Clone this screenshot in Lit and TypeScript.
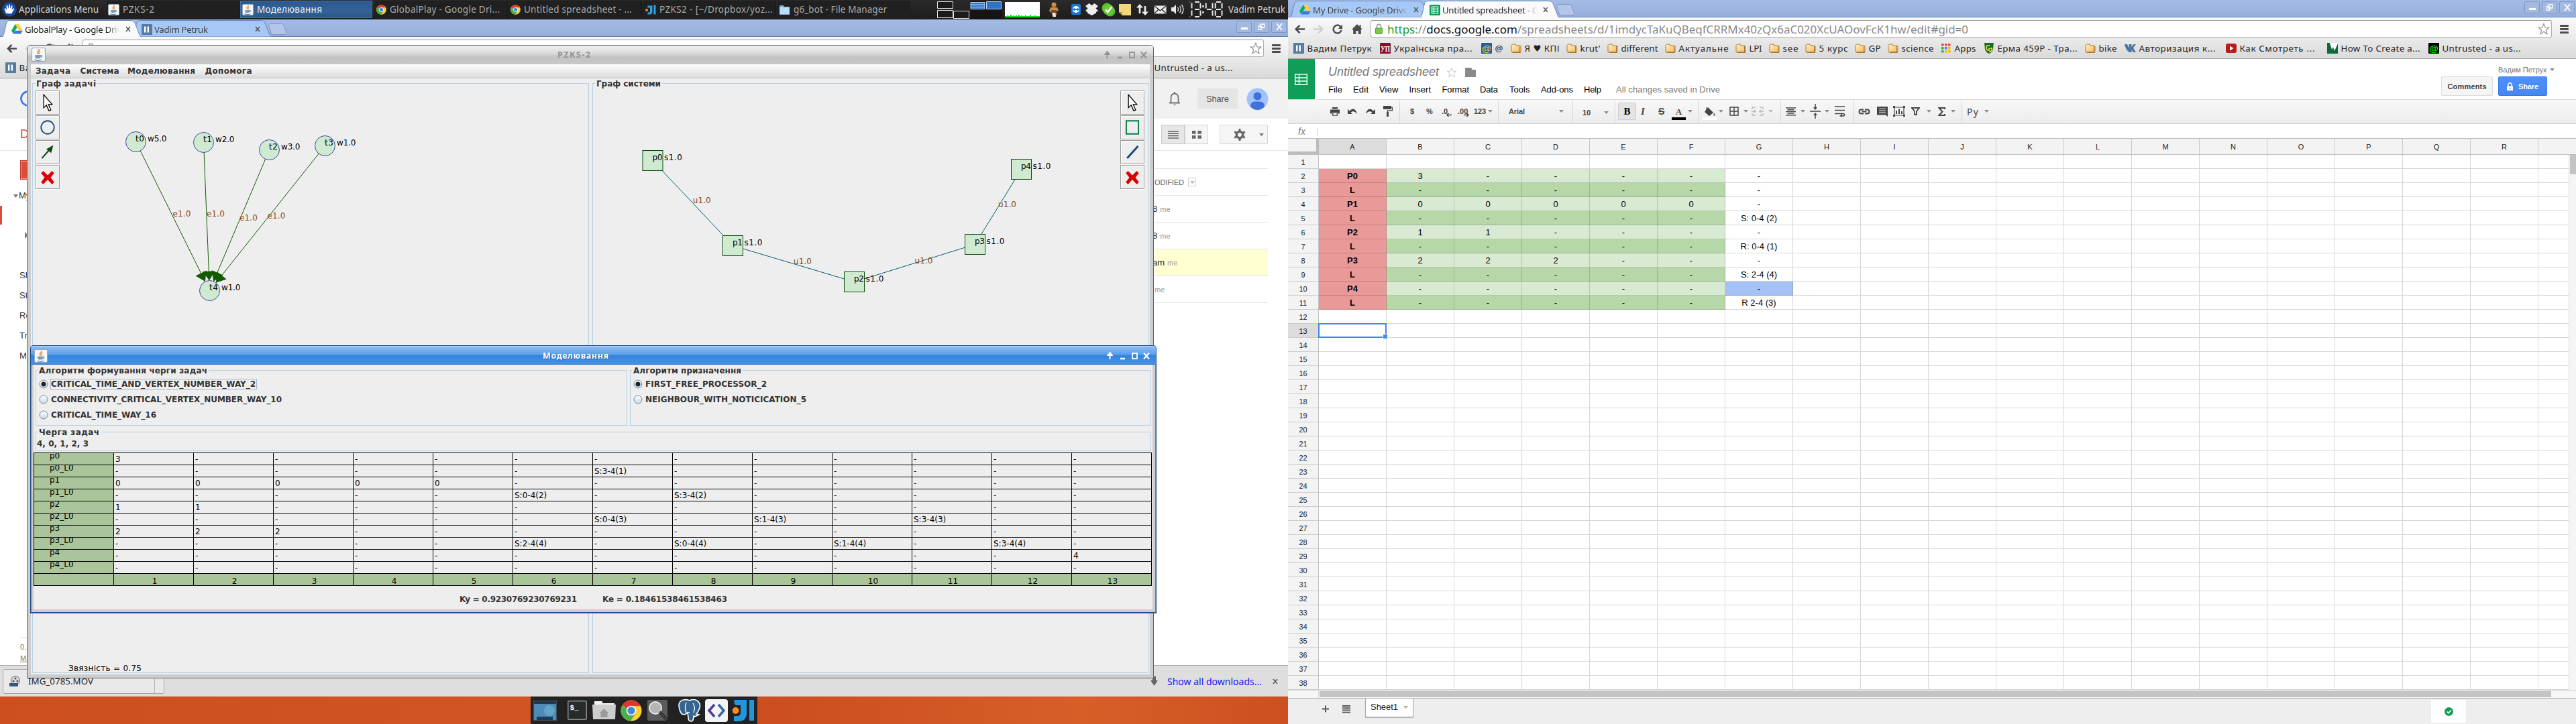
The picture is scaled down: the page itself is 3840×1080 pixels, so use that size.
import { LitElement, html, svg, css, nothing } from "lit";
import { customElement, property, query } from "lit/decorators.js";
import { classMap } from "lit/directives/class-map.js";

type Slot = [number, unknown];

/* Lays items out in a flex row; each one is as wide as the distance to its successor. */
const slots = (start: number, items: Slot[], end: number) => html`
  <div class="pad" style=${`width:${start}px`}></div>
  ${items.map(([x, t], i) => {
    const next = i + 1 < items.length ? items[i + 1][0] : end;
    return html`<div class="slot" style=${`width:${next - x}px`}>${t}</div>`;
  })}
`;

/* The same for a column. */
const vslots = (start: number, items: Slot[], end: number) => html`
  <div class="pad" style=${`height:${start}px`}></div>
  ${items.map(([y, t], i) => {
    const next = i + 1 < items.length ? items[i + 1][0] : end;
    return html`<div class="vslot" style=${`height:${next - y}px`}>${t}</div>`;
  })}
`;

const fit = (t: string, w: number) => html`<fit-text .t=${t} .w=${w}></fit-text>`;

const shared = css`
  * { box-sizing: border-box; }
  svg { display: block; flex: none; }
  .pad { flex: none; }
  .slot { flex: none; display: flex; align-items: center; white-space: nowrap; }
  .vslot { flex: none; display: flex; align-items: flex-start; white-space: nowrap; }
`;

/* One line of text tracked to an exact width. */
@customElement("fit-text")
class FitText extends LitElement {
  @property() t = "";
  @property({ type: Number }) w = 0;
  @query("span") span!: HTMLElement;
  static styles = css`
    :host { display: block; white-space: pre; flex: none; }
    span { display: inline-block; }
  `;
  updated() {
    this.track();
    document.fonts.ready.then(() => this.track());
  }
  track() {
    const s = this.span;
    s.style.letterSpacing = "0px";
    const n = s.getBoundingClientRect().width;
    const len = [...this.t].length;
    if (len > 1) s.style.letterSpacing = `${(this.w - n) / (len - 1)}px`;
    this.style.width = `${this.w}px`;
  }
  render() { return html`<span>${this.t}</span>`; }
}

/* ---------- icons ---------- */
const javaIcon = (s = 18) => html`<svg width=${s} height=${s} viewBox="0 0 20 20">
  <rect x=".5" y=".5" width="19" height="19" rx="2" fill="#f7f7f5" stroke="#8fa9c4"/>
  <path d="M10.500 2c1.500 2-2.600 3-2.200 5 .2 1 1.200 1.500 1.400 2.500M12 4.500c-.5 1.200-2 1.700-1.600 3 .3.800.9 1 .7 2" fill="none" stroke="#ec8b2a" stroke-width="1.400"/>
  <path d="M5 10.500h8v2.500c0 2-1.500 2.500-2.500 2.500h-3c-1.500 0-2.500-1-2.500-2.500z" fill="#7c9cbd"/>
  <path d="M13 11.200c2.200-.6 2.300 2 0 2.300M4 17.300c3 1.200 8 1 10.500 0" fill="none" stroke="#5b80a8" stroke-width="1.200"/>
</svg>`;
const chromeIcon = (s = 16) => html`<svg width=${s} height=${s} viewBox="0 0 32 32">
  <circle cx="16" cy="16" r="15.500" fill="#fbd033"/>
  <path d="M16 16 2.600 8.250A15.500 15.500 0 0 1 29.400 8.250H16z" fill="#e0372c"/>
  <path d="M16 16 2.600 8.250A15.500 15.500 0 0 0 15 31.500L22.500 20z" fill="#4fae4b"/>
  <path d="M16 8.700h13.600" stroke="#c92f25" stroke-width="1"/>
  <circle cx="16" cy="16" r="7.300" fill="#fff"/><circle cx="16" cy="16" r="5.700" fill="#4a86d8"/>
</svg>`;
const driveIcon = html`<svg width="17" height="15" viewBox="0 0 17 15">
  <path d="M5.700 0h5.400l5.600 9.800h-5.400z" fill="#ffcd40"/><path d="M5.700 0 0 9.800 2.800 14.500 8.500 4.800z" fill="#11a861"/>
  <path d="M5.600 9.800h11.100l-2.800 4.700H2.800z" fill="#3777e3"/></svg>`;
const vpIcon = html`<svg width="16" height="16" viewBox="0 0 16 16"><rect width="16" height="16" fill="#567ca4"/>
  <path d="M5.200 3.500v9M9.800 3.500v9" stroke="#fff" stroke-width="2.400"/></svg>`;
const sheetIcon = html`<svg width="16" height="16" viewBox="0 0 16 16"><rect width="16" height="16" rx="1.500" fill="#109d58"/>
  <path d="M3.500 3h9v10h-9zM3.500 6.300h9M3.500 9.700h9M6.500 3v10" fill="none" stroke="#fff" stroke-width="1.200"/></svg>`;
const folderIcon = html`<svg width="16" height="16" viewBox="0 0 16 16">
  <defs><linearGradient id="f" x1="0" y1="0" x2="1" y2="1"><stop offset="0" stop-color="#fff0c8"/><stop offset="1" stop-color="#f4bd5e"/></linearGradient></defs>
  <path d="M1 3.500 2.500 2h4.500l1 2H13.500L15 5v8.500h-14z" fill="url(#f)" stroke="#b07a34"/><path d="M13.500 4.500v10M2.500 14.500h12.300" stroke="#a87838"/></svg>`;
const starIcon = (s = 18, c = "#8c8c8c") => html`<svg width=${s} height=${s} viewBox="0 0 18 18">
  <path d="M9 1.200 11.200 7h5.700l-4.600 3.700 1.700 6L9 13.200l-5 3.500 1.700-6L1.100 7h5.700z" fill="#fff" stroke=${c} stroke-width="1.100"/></svg>`;
const caret = (c = "#8c8c8c") => html`<svg width="7" height="4" viewBox="0 0 7 4"><path d="M0 0h7L3.500 4z" fill=${c}/></svg>`;
const nodeRed = svg`<path d="M4 3 9 8 14 3l2.500 2.500-4 5 4 5.500L14 18.500 9 13l-5 5.500L1.500 16l4-5.500-4-5z" transform="translate(1 0)" fill="#dc0000"/>`;
const arrowCursor = svg`<path d="M5.500 1v15l3.200-3 2.800 6.500 2.200-1-2.700-6.300h4.200z" fill="#fff" stroke="#000"/>`;

const iconUp = html`<svg width="9" height="12" viewBox="0 0 9 12"><path d="M4.500 1v10M1.500 5l3-4 3 4z" fill="currentColor" stroke="currentColor" stroke-width="2"/></svg>`;
const iconMin = html`<svg width="7" height="12" viewBox="0 0 7 12"><path d="M0 10h7" stroke="currentColor" stroke-width="2.500"/></svg>`;
const iconMax = html`<svg width="9" height="12" viewBox="0 0 9 12"><path d="M1 2h7v8H1z" fill="none" stroke="currentColor" stroke-width="1.800"/></svg>`;
const iconClose = html`<svg width="10" height="12" viewBox="0 0 10 12"><path d="M1 1.500l8 9M9 1.500l-8 9" stroke="currentColor" stroke-width="2.200"/></svg>`;

/* ---------- browser frame ---------- */
type Tab = { icon: unknown; text: string; w: number; active: boolean };
type Mark = [number, unknown, string, number];
const tile = (bg: string, fg: string, t: string, serif = false) => html`<svg width="16" height="16" viewBox="0 0 16 16">
  <rect width="16" height="16" rx="1" fill=${bg}/><text x="8" y="13" text-anchor="middle" font-size="13" font-weight="bold"
  font-family=${serif ? "Liberation Serif, serif" : "Liberation Sans, sans-serif"} fill=${fg} textLength="14" lengthAdjust="spacingAndGlyphs">${t}</text></svg>`;

const appsIcon = html`<svg width="15" height="16" viewBox="0 0 15 16">${[0, 1, 2].map(r => [0, 1, 2].map(c =>
  svg`<rect x=${c * 5} y=${1 + r * 5} width="3.500" height="3.500" fill=${[["#e8453c", "#e8453c", "#e8453c"], ["#34a853", "#4285f4", "#fbbc05"], ["#34a853", "#fbbc05", "#fbbc05"]][r][c]}/>`))}</svg>`;
const vkIcon = html`<svg width="17" height="14" viewBox="0 0 17 14"><path d="M0 1h4l2.500 6V1h4v4l3-4H17l-4 5.500L17 13h-4l-2.500-3.500V13H8C4 12 1.500 7 0 1z" fill="#4c75a3"/></svg>`;
const ytIcon = html`<svg width="16" height="14" viewBox="0 0 16 14"><rect width="16" height="14" rx="3" fill="#b81d1a"/><path d="M6 3.500v7L11.500 7z" fill="#fff"/></svg>`;
const gsIcon = html`<svg width="16" height="16" viewBox="0 0 16 16"><path d="M1 0h14l-1 10q-2 5-6 6-4-1-6-6z" fill="#17702f"/>
  <path d="M9 4H5.500L4 6v3l2 2h2V8M9 8h3l.5 2-2 3H8" fill="none" stroke="#f4e12c" stroke-width="1.600"/></svg>`;
const wIcon = html`<svg width="16" height="16" viewBox="0 0 16 16"><rect width="16" height="16" fill="#0b6a3a"/><path d="M4 0 7 10l2-4 2 6L16 1V0z" fill="#fff"/></svg>`;

const BOOKMARKS: Mark[] = [
  [8, vpIcon, "Вадим Петрук", 96], [137, tile("#8f0b2e", "#fff", "УП", true), "Українська пра...", 117],
  [288, tile("#1c5fa8", "#ffc23d", "@"), "@", 12], [332, folderIcon, "Я ♥ КПІ", 52], [415, folderIcon, "krut'", 30],
  [476, folderIcon, "different", 55], [562, folderIcon, "Актуальне", 74], [667, folderIcon, "LPI", 19],
  [717, folderIcon, "see", 23], [771, folderIcon, "5 курс", 43], [845, folderIcon, "GP", 18], [894, folderIcon, "science", 48],
  [974, appsIcon, "Apps", 32], [1037, gsIcon, "Ерма 459Р - Тра...", 119], [1188, folderIcon, "bike", 27],
  [1247, vkIcon, "Авторизация к...", 114], [1398, ytIcon, "Как Смотреть ...", 112], [1549, wIcon, "How To Create a...", 118],
  [1700, tile("#000", "#0f0", "@"), "Untrusted - a us...", 117],
];

@customElement("browser-frame")
class BrowserFrame extends LitElement {
  @property({ attribute: false }) tabs: Tab[] = [];
  @property({ attribute: false }) marks: Mark[] = BOOKMARKS;
  @property({ attribute: false }) url: [string, string, string] = ["", "", ""];
  @property({ type: Number }) urlWidth = 866;
  static styles = [shared, css`
    :host { display: block; height: 88px; font: 13.300px "Noto Sans", "Open Sans", "DejaVu Sans", sans-serif; color: #222; }
    .strip { height: 26px; display: flex; background: linear-gradient(#a4bce4, #97aedb); border-bottom: 1px solid #5f7fae; padding-left: 3px; }
    .tab { position: relative; isolation: isolate; width: 194px; height: 25px; display: flex; align-items: center; padding: 4px 0 0 14px; color: #444; }
    .tab.active { z-index: 1; height: 26px; padding-top: 3px; color: #222; }
    .shape { position: absolute; left: 0; top: 1px; z-index: -1; }
    .name { width: 141px; overflow: hidden; margin-left: 3px; -webkit-mask-image: linear-gradient(90deg, #000 87%, transparent); }
    .x { margin-left: 9px; }
    .plus { margin: 6px 0 0 9px; }
    .win { margin-left: auto; display: flex; gap: 3px; padding: 2px 2px 0 0; }
    .wb { width: 23px; height: 18px; border: 1px solid #7f99c6; border-radius: 2px; background: #a3b9e0; display: grid; place-items: center; }
    .tools { height: 61px; background: linear-gradient(#f9f9f9, #ebebeb 48%, #dadada); padding-top: 4px; }
    .nav { height: 26px; display: flex; }
    .omni { width: 1761px; height: 26px; border: 1px solid #b0b0b0; border-top-color: #989898; border-radius: 3px; background: #fff; display: flex; align-items: center; padding-left: 6px; font-size: 17px; }
    .url { margin-left: 7px; display: flex; color: #888; overflow: hidden; height: 24px; align-items: center; }
    .omni .star { margin-left: auto; padding-right: 2px; }
    .marks { height: 31px; display: flex; align-items: center; }
    .marks .slot { gap: 4.500px; }
    .line { height: 1px; background: #a3a3a3; }
  `];
  render() {
    const [a, b, c] = this.url;
    return html`
      <div class="strip">
        ${this.tabs.map(t => html`<div class=${classMap({ tab: true, active: t.active })}>
          <svg class="shape" width="208" height="25" viewBox="0 0 208 25">
            <path d="M0 25C4 24 5 4 8 2Q9 .5 12 .5H192Q196 .5 198 4L205 22Q206 25 208 25z" fill=${t.active ? "#fafafa" : "#a6c8f6"} stroke="#6a87b8"/>
            ${t.active ? svg`<path d="M2 25h204" stroke="#fafafa" stroke-width="2"/>` : nothing}
          </svg>
          ${t.icon}<div class="name">${fit(t.text, t.w)}</div>
          <svg class="x" width="8" height="9" viewBox="0 0 8 9"><path d="M1 1l6 7M7 1L1 8" stroke="#555" stroke-width="1.500"/></svg>
        </div>`)}
        <svg class="plus" width="28" height="17" viewBox="0 0 28 17"><path d="M2 .5h18q2 0 3 3l4 11q0 2-2 2H7q-2 0-3-3L.8 3Q.5.5 2 .5z" fill="#b3c5e8" stroke="#7f99c6"/></svg>
        <div class="win">
          <div class="wb"><svg width="10" height="9"><path d="M0 6.500h10" stroke="#fff" stroke-width="3"/></svg></div>
          <div class="wb"><svg width="11" height="10" viewBox="0 0 11 10"><path d="M3.500 1h6.500v5H3.500zM1 4h5v5H1z" fill="none" stroke="#fff" stroke-width="1.300"/></svg></div>
          <div class="wb"><svg width="10" height="10" viewBox="0 0 10 10"><path d="M1 0l8 10M9 0L1 10" stroke="#fff" stroke-width="1.800"/></svg></div>
        </div>
      </div>
      <div class="tools">
        <div class="nav">
          ${slots(10, [
            [10, html`<svg width="15" height="13" viewBox="0 0 15 13"><path d="M15 6.500H3M7.500.8 1.800 6.500l5.700 5.700" fill="none" stroke="#4d4d4d" stroke-width="2.600"/></svg>`],
            [38, html`<svg width="15" height="13" viewBox="0 0 15 13"><path d="M0 6.500h12M7.500.8l5.700 5.700-5.700 5.700" fill="none" stroke="#cfcfcf" stroke-width="2.600"/></svg>`],
            [66, html`<svg width="16" height="15" viewBox="0 0 16 15"><path d="M12.500 4A6 6 0 1 0 13.500 9" fill="none" stroke="#4d4d4d" stroke-width="2.500"/><path d="M15 .5v6.500H8.800z" fill="#4d4d4d"/></svg>`],
            [95, html`<svg width="16" height="15" viewBox="0 0 16 15"><path d="M8 0 0 8h2.200v7H6.300v-5h3.400v5h4.100V8H16l-2.500-2.500V1h-2v2.500z" fill="#4d4d4d"/></svg>`],
            [123, html`<div class="omni">
              <svg width="11" height="16" viewBox="0 0 11 16"><path d="M2.500 8V4.500a3 3.300 0 0 1 6 0V8" fill="none" stroke="#9a9a9a" stroke-width="1.600"/><rect x=".5" y="7" width="10" height="8.500" rx="1" fill="#7cc850" stroke="#4f9b2c"/></svg>
              <div class="url"><fit-url .parts=${[a, b, c]} .w=${this.urlWidth}></fit-url></div>
              <div class="star">${starIcon()}</div></div>`],
            [1896, html`<svg width="13" height="13" viewBox="0 0 13 13"><path d="M1 1.500h11M1 6.500h11M1 11.500h11" stroke="#4d4d4d" stroke-width="2.800" stroke-linecap="round"/></svg>`],
          ], 1912)}
        </div>
        <div class="marks">${slots(8, this.marks.map(([x, i, t, w]) => [x, html`${i}${fit(t, w)}`] as Slot), 1880)}</div>
      </div>
      <div class="line"></div>`;
  }
}

@customElement("fit-url")
class FitUrl extends LitElement {
  @property({ attribute: false }) parts: string[] = [];
  @property({ type: Number }) w = 0;
  @query("div") box!: HTMLElement;
  static styles = css`
    :host { display: block; white-space: pre; }
    div { display: inline-block; color: #8a8a8a; }
    .s { color: #1f9a1f; } .h { color: #111; }
  `;
  updated() {
    const run = () => {
      this.box.style.letterSpacing = "0px";
      const n = this.box.getBoundingClientRect().width;
      this.box.style.letterSpacing = `${(this.w - n) / (this.parts.join("").length + 3)}px`;
    };
    run();
    document.fonts.ready.then(run);
  }
  render() {
    const [s, h, p] = this.parts;
    return html`<div><span class="s">${s}</span>://<span class="h">${h}</span>${p}</div>`;
  }
}

/* ---------- top panel ---------- */
const SEG: Record<string, string> = { "1": "bc", "3": "abgcd", "4": "fgbc", "8": "abcdefg" };
const digit = (d: string, x: number) => {
  const p: Record<string, string> = {
    a: "M2 1h7", b: "M10.500 2.500v8", c: "M10.500 13.500v8", d: "M2 23h7", e: "M.7 13.500v8", f: "M.7 2.500v8", g: "M2 12h7",
  };
  return svg`<g transform=${`translate(${x} 0)`}>${[...SEG[d]].map(s => svg`<path d=${p[s]} stroke="#e8e8e8" stroke-width="2"/>`)}</g>`;
};

@customElement("top-panel")
class TopPanel extends LitElement {
  static styles = [shared, css`
    :host { display: flex; height: 29px; background: linear-gradient(#2a2a2a, #1d1d1d); color: #d8d8d8; padding-bottom: 1px;
      font: 13.500px "Noto Sans", "Open Sans", "DejaVu Sans", sans-serif; overflow: hidden; }
    .task { height: 26px; display: flex; align-items: center; gap: 5px; padding-left: 2px; width: 198px; color: #a9a9a9; border-right: 1px solid #171717; background: #202020; }
    .task.on { background: linear-gradient(#2b598f, #336299 60%, #2a5587); border: 1px solid #4775a8; color: #eee; width: 197px; }
    .menu { display: flex; gap: 3px; align-items: center; color: #d4d4d4; }
  `];
  render() {
    const task = (i: unknown, t: string, w: number, on = false) =>
      html`<div class=${classMap({ task: true, on })}>${i}${fit(t, w)}</div>`;
    return html`${slots(3, [
      [3, html`<div class="menu"><svg width="22" height="22" viewBox="0 0 22 22"><circle cx="11" cy="11" r="10.700" fill="#1747a0"/>
        <path d="M6 17 3.500 10l1.500-1 2 3L6.500 5 8 4.500 9.500 10 10.500 3.500l1.600.2L12.200 10l2.300-5 1.300.8-1.300 5.700L17.500 9l.8 1.500L14 17.500z" fill="#fff"/></svg>${fit("Applications Menu", 119)}</div>`],
      [159, task(javaIcon(17), "PZKS-2", 47)],
      [358, task(javaIcon(17), "Моделювання", 97, true)],
      [559, task(chromeIcon(15), "GlobalPlay - Google Dri...", 164)],
      [759, task(chromeIcon(15), "Untitled spreadsheet - ...", 161)],
      [959, task(html`<svg width="17" height="17" viewBox="0 0 32 34"><rect width="32" height="34" fill="#222"/><path d="M8 5h14v18q0 8-9 8H8v-6h4q3 0 3-3V11H8zM26 3h6v28h-6z" fill="#2d9fe0"/><circle cx="5" cy="18" r="4" fill="#f08a1c"/></svg>`, "PZKS2 - [~/Dropbox/yoz...", 169)],
      [1159, task(html`<svg width="17" height="16" viewBox="0 0 17 16"><path d="M1 2h6l1 2h8v12H1z" fill="#7fb0dc"/><path d="M1 5h15v10H1z" fill="#b9dcf8"/></svg>`, "g6_bot - File Manager", 139)],
      [1397, html`<svg width="97" height="27" viewBox="0 0 97 27">
        <rect x="49" width="48" height="27" fill="#151515"/>
        <path d="M.5 1.500h23v10H.5zM.5 14.500h23v11H.5zM24.500 15.500h23v11h-23z" fill="#1b1b1b" stroke="#e4e4e4"/>
        <path d="M50 2.500h21v10H50zM73.500 1.500h22v11h-22z" fill="#2f73c4" stroke="#bcd6f4"/><path d="M50 6h21M50 9.500h21" stroke="#cfe2f8"/></svg>`],
      [1498, html`<svg width="52" height="23" viewBox="0 0 52 23"><rect width="52" height="23" fill="#fff"/>
        <path d="M0 22h52M4 20v2M9 19v3M13 20v2M17 20v2M21 19v3M25 20v2M31 20v2M38 19v3M45 20v2" stroke="#12e312" stroke-width="2"/></svg>`],
      [1562, html`<svg width="18" height="23" viewBox="0 0 18 23"><circle cx="9" cy="4" r="3.500" fill="#c98a4e"/><path d="M4 8l10 0 2 5-3 1v3l-1 5H7l-1-5-4-4z" fill="#c98a4e"/><path d="M5 12h8v4H5z" fill="#7a4a20"/><path d="M7 16h4l1 6H8z" fill="#dfe8f4"/></svg>`],
      [1597, html`<svg width="14" height="16" viewBox="0 0 14 16"><rect width="14" height="16" rx="2" fill="#1679d8"/><circle cx="7" cy="8" r="5" fill="#fff"/><path d="M1.500 8l3.500-2.500v1.600h4V5.500L12.500 8 9 10.500V8.900H5v1.600z" fill="#1679d8"/></svg>`],
      [1618, html`<svg width="19" height="18" viewBox="0 0 19 18"><path d="M5.500 0 9.500 3 13.500 0 19 4l-3.500 3.500L19 11l-3 2v1.500L9.500 18 3 14.500V13L0 11l3.500-3.500L0 4z" fill="#eee"/></svg>`],
      [1642, html`<svg width="21" height="21" viewBox="0 0 21 21"><circle cx="8" cy="8" r="7.500" fill="#55b92c"/><circle cx="13" cy="13" r="7.500" fill="#55b92c"/><circle cx="10.500" cy="10.500" r="8" fill="#66c93c"/><path d="M6 10.500l3.300 3.500L15 6.500" fill="none" stroke="#fff" stroke-width="2.500"/></svg>`],
      [1667, html`<svg width="19" height="19" viewBox="0 0 19 19"><path d="M1 1h18v17H6L1 13z" fill="#f0d878"/><path d="M1 13h5v5z" fill="#b89b38"/></svg>`],
      [1694, html`<svg width="18" height="17" viewBox="0 0 18 17"><path d="M5 14V4M13 3v10" stroke="#eee" stroke-width="2.600"/><path d="M0 5.500 5 0l5 5.500zM8 11.500l5 5.500 5-5.500z" fill="#eee"/></svg>`],
      [1720, html`<svg width="19" height="13" viewBox="0 0 19 13"><rect x=".5" y=".5" width="18" height="12" fill="#e8e8e8"/><path d="M1 1l8.500 7L18 1M1 12l6-6M18 12l-6-6" fill="none" stroke="#222" stroke-width="1.200"/></svg>`],
      [1746, html`<svg width="19" height="16" viewBox="0 0 19 16"><path d="M0 5h3l4-4v14l-4-4H0z" fill="#e8e8e8"/><path d="M9.500 5q2 3 0 6M12.500 3q3.500 5 0 10M15.500 1q5 7 0 14" fill="none" stroke="#e8e8e8" stroke-width="1.300"/></svg>`],
      [1770, html`<svg width="54" height="24" viewBox="-2 0 54 24">${digit("1", -6)}${digit("3", 7)}<path d="M21.500 6v3M21.500 15v3" stroke="#e8e8e8" stroke-width="2.500"/>${digit("4", 25)}${digit("8", 39)}<path d="M0 1h3M0 23h3" stroke="#777"/></svg>`],
      [1831, fit("Vadim Petruk", 85)],
    ], 1920)}`;
  }
}

/* ---------- dock ---------- */
@customElement("app-dock")
class AppDock extends LitElement {
  static styles = [shared, css`
    :host { display: flex; width: 338px; height: 41px; background: #222; align-items: center; }
  `];
  render() {
    return slots(4, [
      [795, html`<svg width="35" height="30" viewBox="0 0 35 30"><rect x=".5" y=".5" width="34" height="29" fill="#22384c" stroke="#44525e"/><rect x="1" y="5" width="33" height="24" fill="#4d8ab6"/><circle cx="24" cy="15" r="8" fill="#6fb5cf" opacity=".6"/><rect x="5" y="24" width="24" height="5" fill="#1c3a60"/></svg>`],
      [846, html`<svg width="29" height="29" viewBox="0 0 29 29"><rect x=".8" y=".8" width="27.400" height="27.400" rx="1.500" fill="#262b2c" stroke="#8b8f90" stroke-width="1.500"/><text x="3.500" y="14" font-family="Liberation Mono, monospace" font-size="11" font-weight="bold" fill="#fff">$_</text></svg>`],
      [883, html`<svg width="35" height="27" viewBox="0 0 35 27"><path d="M3 0h12v3h18v6H3z" fill="#f4f4f4"/><path d="M0 5h35l-1 22H1z" fill="#cdcdcd"/><path d="M17.500 11l-7 7h2v6h10v-6h2z" fill="#9b9b9b"/></svg>`],
      [925, chromeIcon(32)],
      [965, html`<svg width="32" height="32" viewBox="0 0 32 32"><rect width="30" height="31" rx="2" fill="#5b5b5b"/><circle cx="12" cy="12" r="9" fill="#b4b4b4" stroke="#e6e6e6" stroke-width="2"/><path d="M18 18l12 12" stroke="#222" stroke-width="4"/><path d="M18 18l12 12" stroke="#888" stroke-width="1"/></svg>`],
      [1011, html`<svg width="34" height="34" viewBox="0 0 34 34"><path d="M8 1q5-1 9 1 5-3 11 0 6 4 4 11-2 6-5 9l4 1-6 3-2-1q0 8-4 8t-4-6l-1-7-4 3-5-1Q1 16 1 8 2 2 8 1z" fill="#336791" stroke="#fff" stroke-width="1.600"/><path d="M12 5q-3 8 0 15M22 6q4 6 1 14M14 20h3" fill="none" stroke="#fff" stroke-width="1.300"/></svg>`],
      [1051, html`<svg width="34" height="34" viewBox="0 0 34 34"><rect width="34" height="34" rx="4" fill="#f4f4f6"/><path d="M14 8 6 17l8 9" fill="none" stroke="#4a3a9c" stroke-width="3.500"/><path d="M20 8l8 9-8 9" fill="none" stroke="#3465a4" stroke-width="3.500"/></svg>`],
      [1092, html`<svg width="33" height="34" viewBox="0 0 33 34"><path d="M3 1h18v20q0 12-12 12H2v-8h5q5 0 5-5V9H5q-4-3-2-8zM25 1h7v31h-7z" fill="#2196dc"/><circle cx="4.500" cy="17" r="5" fill="#f68b1f"/></svg>`],
    ], 1129);
  }
}

/* ---------- graph editor window ---------- */
const TASKS: [string, string, number, number][] = [
  ["t0", "w5.0", 202.5, 211.5], ["t1", "w2.0", 303.5, 212.5], ["t2", "w3.0", 401.5, 223.5], ["t3", "w1.0", 484.5, 217.5],
];
const SINK: [string, string, number, number] = ["t4", "w1.0", 312.5, 433.5];
const PROCS: [string, number, number][] = [
  ["p0", 973, 239.5], ["p1", 1092.5, 366.5], ["p2", 1273.5, 420.5], ["p3", 1453.5, 364.5], ["p4", 1522.5, 252.5],
];

@customElement("graph-window")
class GraphWindow extends LitElement {
  static styles = [shared, css`
    :host { display: flex; flex-direction: column; box-sizing: border-box; width: 1680px; height: 945px; border: 1px solid #666; border-radius: 5px 5px 0 0; background: #cdcdcd;
      font: bold 12px "DejaVu Sans", sans-serif; color: #333; overflow: hidden; }
    .title { height: 28px; display: flex; align-items: center; background: linear-gradient(#f0f0f0, #dcdcdc 40%, #c2c2c2 62%, #c8c8c8); color: #949494; padding-bottom: 1px; font: bold 12.500px "Noto Sans", "Open Sans", sans-serif; }
    .body { flex: 1; margin: 0 5px 5px 5px; background: #eee; }
    .menu { height: 21px; background: linear-gradient(#fff, #dadada); border-bottom: 1px solid #ccc; display: flex; align-items: center; }
    .panels { display: flex; gap: 5px; padding: 7px 0 0 2px; }
    .panel { position: relative; width: 830px; height: 880px; border: 1px solid #b8cfe5; display: flex; flex-direction: column; align-items: flex-start; padding-left: 4px; }
    .panel.right { align-items: stretch; }
    .label { margin: -7px 0 3px -1px; height: 14px; line-height: 14px; padding: 0 2px; background: #eee; width: max-content; position: relative; }
    .tool { width: 36px; height: 36px; margin-bottom: 1px; border: 1px solid #999; box-shadow: inset 1px 1px #fff, 1px 1px #fff; background: #eee; display: grid; place-items: center; flex: none; }
    .panel.right .tool { align-self: flex-end; margin-right: 6px; }
    .canvas { position: absolute; left: -1px; top: -1px; pointer-events: none; }
    text { font: 12px "DejaVu Sans", sans-serif; fill: #000; }
    .w { fill: #8b4513; }
  `];
  tool(s: unknown) { return html`<div class="tool"><svg width="26" height="26" viewBox="0 0 20 20">${s}</svg></div>`; }
  render() {
    const [, , sx, sy] = SINK;
    const node = ([n, w, x, y]: [string, string, number, number]) => svg`
      <circle cx=${x} cy=${y} r="15" fill="#cfead1" stroke="#4048a0"/>
      <text x=${x - 0.5} y=${y - 0.5} textLength="13">${n}</text><text x=${x + 17.5} y=${y - 0.5} textLength="28.500">${w}</text>`;
    return html`
      <div class="title">${slots(6, [
        [47, javaIcon(21)], [831, fit("PZKS-2", 49)], [1646, iconUp], [1666, iconMin], [1683, iconMax], [1700, iconClose],
      ], 1715)}</div>
      <div class="body">
        <div class="menu">${slots(7, [
          [53, fit("Задача", 52)], [119.5, fit("Система", 58)], [190, fit("Моделювання", 101)], [305.5, fit("Допомога", 70)],
        ], 400)}</div>
        <div class="panels">
          <div class="panel">
            <div class="label">${fit("Граф задачі", 89)}</div>
            ${this.tool(arrowCursor)}
            ${this.tool(svg`<circle cx="10" cy="10" r="7.500" fill="none" stroke="#124f80" stroke-width="1.400"/>`)}
            ${this.tool(svg`<path d="M3.500 17 13 6" stroke="#0c4a12" stroke-width="1.600"/><path d="M16.500 2 8.500 6.500l5.500 4.500z" fill="#0c4a12"/>`)}
            ${this.tool(nodeRed)}
            <svg class="canvas" width="830" height="880" viewBox="48 124 830 880">
              ${TASKS.map(([, , x, y]) => {
                const d = Math.hypot(sx - x, sy - y), ux = (sx - x) / d, uy = (sy - y) / d;
                const tx = sx - ux * 15, ty = sy - uy * 15, bx = tx - ux * 14, by = ty - uy * 14;
                return svg`<path d=${`M${x} ${y}L${tx} ${ty}`} stroke="#145a00"/>
                  <path d=${`M${tx} ${ty}L${bx - uy * 9} ${by + ux * 9}L${bx + uy * 9} ${by - ux * 9}z`} fill="#145a00"/>`;
              })}
              ${TASKS.map(([, , x, y]) => svg`<text class="w" x=${(x + sx) / 2} y=${(y + sy) / 2} textLength="27">e1.0</text>`)}
              ${TASKS.map(node)}${node(SINK)}
              <text x="102" y="1000.500" textLength="109">Звязність = 0.75</text>
            </svg>
          </div>
          <div class="panel right">
            <div class="label">${fit("Граф системи", 96)}</div>
            ${this.tool(arrowCursor)}
            ${this.tool(svg`<path d="M3 2.500h14v15H3z" fill="none" stroke="#087a45" stroke-width="1.500"/>`)}
            ${this.tool(svg`<path d="M4 17 16.500 3" stroke="#124f80" stroke-width="2.300"/>`)}
            ${this.tool(nodeRed)}
            <svg class="canvas" width="830" height="880" viewBox="883 124 830 880">
              ${PROCS.slice(1).map(([, x, y], i) => {
                const [, px, py] = PROCS[i];
                return svg`<path d=${`M${px} ${py}L${x} ${y}`} stroke="#006070"/>
                  <text class="w" x=${(x + px) / 2} y=${(y + py) / 2} textLength="27">u1.0</text>`;
              })}
              ${PROCS.map(([n, x, y]) => svg`<rect x=${x - 15} y=${y - 15} width="30" height="30" fill="#cfead1" stroke="#0b4a0b"/>
                <text x=${x - 0.5} y=${y - 0.5} textLength="15">${n}</text><text x=${x + 17} y=${y - 0.5} textLength="27">s1.0</text>`)}
            </svg>
          </div>
        </div>
      </div>`;
  }
}

/* ---------- simulation window ---------- */
const COLS = 13;
const ROWS: [string, Record<number, string>][] = [
  ["p0", { 1: "3" }], ["p0_L0", { 7: "S:3-4(1)" }],
  ["p1", { 1: "0", 2: "0", 3: "0", 4: "0", 5: "0" }], ["p1_L0", { 6: "S:0-4(2)", 8: "S:3-4(2)" }],
  ["p2", { 1: "1", 2: "1" }], ["p2_L0", { 7: "S:0-4(3)", 9: "S:1-4(3)", 11: "S:3-4(3)" }],
  ["p3", { 1: "2", 2: "2", 3: "2" }], ["p3_L0", { 6: "S:2-4(4)", 8: "S:0-4(4)", 10: "S:1-4(4)", 12: "S:3-4(4)" }],
  ["p4", { 13: "4" }], ["p4_L0", {}],
];

@customElement("model-window")
class ModelWindow extends LitElement {
  static styles = [shared, css`
    :host { display: flex; flex-direction: column; box-sizing: border-box; width: 1679px; height: 400px; border: 1px solid #1c4f8c; border-bottom-width: 2px; border-radius: 5px 5px 0 0; background: #cdcdcd;
      font: bold 12px "DejaVu Sans", sans-serif; color: #333; overflow: hidden; box-shadow: inset 1px 0 #3b88dd, inset -1px 0 #3b88dd; }
    .title { height: 28px; flex: none; display: flex; align-items: center; color: #fff; background: linear-gradient(#b4d6fa, #86b8f0 8%, #5b9fe8 48%, #3484da 52%, #4690e2); border-bottom: 1px solid #2f79cf; padding-top: 2px; text-shadow: 1px 1px #1f5fa8; font: bold 12.500px "Noto Sans", "Open Sans", sans-serif; }
    .body { flex: 1; margin: 0 5px 4px 4px; background: #eee; display: flex; flex-direction: column; }
    .groups { display: flex; gap: 4px; padding: 8px 0 0 3px; }
    .group { height: 83px; border: 1px solid #b8cfe5; padding-left: 4px; }
    .g1 { width: 882px; } .g2 { width: 777px; }
    .g3 { width: 1663px; height: 29px; margin: 9px 0 2px 3px; padding-left: 1px; }
    .label { margin: -7px 0 0 -2px; height: 15px; line-height: 15px; padding: 0 2px; background: #eee; width: max-content; }
    .g3 .label { margin-left: 1px; }
    .opt { height: 23px; display: flex; align-items: center; gap: 3px; padding-top: 1px; }
    .opt span { padding: 0 1px 0 0; border: 1px solid transparent; line-height: 14px; }
    .opt.on.focus span { border-color: #a3b8cc; }
    .value { line-height: 18px; }
    .table { display: grid; grid-template-columns: repeat(14, 119px); grid-auto-rows: 18px; width: 1667px; border-left: 1px solid #000; border-top: 1px solid #000; font-weight: normal; color: #000; }
    .cell { border-right: 1px solid #000; border-bottom: 1px solid #000; padding-left: 2px; line-height: 18px; white-space: nowrap; overflow: hidden; }
    .head { background: #a9c599; padding-left: 23px; line-height: 8px; }
    .num { background: #a9c599; line-height: 23px; text-align: center; padding-left: 3px; height: 18px; }
    .foot { display: flex; margin-top: 13px; }
  `];
  opt(t: string, w: number, on = false, focus = false) {
    return html`<div class=${classMap({ opt: true, on, focus })}>
      <svg width="14" height="14" viewBox="0 0 14 14"><defs><linearGradient id="r" x1="0" y1="0" x2="0" y2="1"><stop offset="0" stop-color="#fff"/><stop offset="1" stop-color="#c4d8ec"/></linearGradient></defs>
      <circle cx="7" cy="7" r="6" fill="url(#r)" stroke="#7a8a99"/>${on ? svg`<circle cx="7" cy="7" r="3.500" fill="#222"/>` : nothing}</svg>
      <span>${fit(t, w)}</span></div>`;
  }
  render() {
    return html`
      <div class="title">${slots(5, [
        [51, javaIcon(20)], [809, fit("Моделювання", 98)], [1650, iconUp], [1670, iconMin], [1687, iconMax], [1704, iconClose],
      ], 1718)}</div>
      <div class="body">
        <div class="groups">
          <div class="group g1"><div class="label">${fit("Алгоритм формування черги задач", 251)}</div>
            ${this.opt("CRITICAL_TIME_AND_VERTEX_NUMBER_WAY_2", 305, true, true)}
            ${this.opt("CONNECTIVITY_CRITICAL_VERTEX_NUMBER_WAY_10", 344)}
            ${this.opt("CRITICAL_TIME_WAY_16", 157)}</div>
          <div class="group g2"><div class="label">${fit("Алгоритм призначення", 161)}</div>
            ${this.opt("FIRST_FREE_PROCESSOR_2", 181, true)}
            ${this.opt("NEIGHBOUR_WITH_NOTICICATION_5", 240)}</div>
        </div>
        <div class="group g3"><div class="label">${fit("Черга задач", 90)}</div><div class="value">${fit("4, 0, 1, 2, 3", 77)}</div></div>
        <div class="table">
          ${ROWS.map(([n, v]) => html`<div class="cell head">${n}</div>${Array.from({ length: COLS }, (_, i) => html`<div class="cell">${v[i + 1] ?? "-"}</div>`)}`)}
          <div class="cell num"></div>${Array.from({ length: COLS }, (_, i) => html`<div class="cell num">${i + 1}</div>`)}
        </div>
        <div class="foot">${slots(635, [[685, fit("Ky = 0.9230769230769231", 175)], [898, fit("Ke = 0.18461538461538463", 186)]], 1090)}</div>
      </div>`;
  }
}

/* ---------- left page behind the windows ---------- */
@customElement("drive-page")
class DrivePage extends LitElement {
  static styles = [shared, css`
    :host { display: flex; flex-direction: column; height: 922px; background: #fff; font: 13px "Liberation Sans", Arial, sans-serif; color: #333; }
    .band { height: 60px; flex: none; background: #f1f1f1; display: flex; }
    .bar { height: 48px; flex: none; display: flex; border-bottom: 1px solid #e5e5e5; }
    .share { width: 60px; height: 30px; background: #e5e5e5; display: grid; place-items: center; color: #555; }
    .drive { color: #dd4b39; font-size: 18px; width: 60px; }
    .body { height: 767px; display: flex; justify-content: space-between; }
    .left { width: 60px; overflow: hidden; }
    .right { width: 199px; font-size: 13px; color: #222; }
    .btn { width: 35px; height: 29px; border: 1px solid #d5d5d5; background: #f5f5f5; display: grid; place-items: center; }
    .btn.on { background: #e6e6e6; border-color: #ccc; }
    .gear { width: 72px; height: 29px; border: 1px solid #d5d5d5; background: #f5f5f5; border-radius: 2px; display: flex; align-items: center; justify-content: space-between; padding: 0 5px 0 20px; }
    .red { width: 60px; height: 29px; margin-left: 30px; background: #dd4b39; border: 1px solid #c03a2a; box-shadow: inset 0 0 0 1px #f0a59b; }
    .mark { width: 3px; height: 28px; background: #dd4b39; }
    .t { margin-left: 29px; line-height: 20px; }
    .line20 { line-height: 20px; }
    .file { width: 169px; height: 40px; border-top: 1px solid #e4e4e4; display: flex; align-items: center; gap: 4px; }
    .file .n { margin-left: -3px; }
    .file.hl { background: #ffffd2; }
    .me { color: #999; font-size: 11px; }
    .mod { width: 169px; height: 40px; border-top: 1px solid #e4e4e4; display: flex; align-items: center; gap: 6px; font-size: 11px; color: #666; }
    .dd { width: 12px; height: 13px; border: 1px solid #ccc; display: grid; place-items: center; }
    .quota { margin-left: 30px; border-top: 1px solid #ddd; width: 30px; padding-top: 6px; font-size: 11px; line-height: 17px; color: #777; }
    .u { text-decoration: underline; }
    .dl { height: 47px; background: #dedede; border-top: 1px solid #a3a3a3; display: flex; align-items: center; font: 13.300px "Noto Sans", "Open Sans", sans-serif; color: #222; }
    .item { width: 241px; height: 37px; border: 1px solid #a8a8a8; border-radius: 3px; background: #e9e9e9; display: flex; align-items: center; gap: 11px; padding-left: 9px; margin-right: auto; margin-left: 4px; }
    .split { width: 1px; height: 35px; background: #b4b4b4; margin-left: auto; margin-right: 13px; }
    .link { color: #1a1aee; text-decoration: underline; margin: 0 16px 0 14px; font-size: 14px; }
    .end { margin-right: 15px; }
  `];
  render() {
    return html`
      <div class="band">${slots(30, [
        [30, html`<svg width="24" height="24" viewBox="0 0 24 24"><circle cx="12" cy="12" r="10.500" fill="none" stroke="#2a7af0" stroke-width="2.600"/></svg>`],
        [1742, html`<svg width="18" height="21" viewBox="0 0 18 21"><path d="M1 16.500h16M3.500 16V9q0-6 5.500-6.500Q14.500 3 14.500 9v7M9 0v3" fill="none" stroke="#757575" stroke-width="1.800"/><path d="M7 18.500h4l-2 2z" fill="#757575"/></svg>`],
        [1785, html`<div class="share">${fit("Share", 34)}</div>`],
        [1858, html`<svg width="33" height="33" viewBox="0 0 33 33"><circle cx="16.500" cy="16.500" r="16" fill="#a1c2fa"/><circle cx="16.500" cy="12.500" r="6" fill="#3f72df"/><path d="M6 28q0-7.500 7-7.500h7q7 0 7 7.500-4 5-10.500 5T6 28z" fill="#3f72df"/></svg>`],
      ], 1900)}</div>
      <div class="bar">${slots(30, [
        [30, html`<div class="drive">Drive</div>`],
        [1731, html`<div class="btn on"><svg width="16" height="12"><path d="M0 1h16M0 4.300h16M0 7.600h16M0 10.900h16" stroke="#666" stroke-width="1.500"/></svg></div>`],
        [1766, html`<div class="btn"><svg width="14" height="12" viewBox="0 0 14 12"><path d="M0 0h5.500v4.800H0zM8.500 0H14v4.800H8.500zM0 7h5.500v4.800H0zM8.500 7H14v4.800H8.500z" fill="#666"/></svg></div>`],
        [1818, html`<div class="gear"><svg width="18" height="18" viewBox="0 0 18 18"><circle cx="9" cy="9" r="4.700" fill="none" stroke="#666" stroke-width="3.600"/><path d="M9 0v18M1.200 4.500l15.600 9M1.200 13.500l15.600-9" stroke="#666" stroke-width="3" stroke-dasharray="4 10"/></svg>${caret("#777")}</div>`],
      ], 1890)}</div>
      <div class="body">
        <div class="left">${vslots(14, [
          [239, html`<div class="red"></div>`],
          [282, html`<svg width="28" height="20"><path d="M20 8h7l-3.500 5z" fill="#777"/></svg><span class="line20">My Drive</span>`],
          [307, html`<div class="mark"></div>`],
          [346, html`<svg width="46" height="10"><path d="M37 0l5 5-5 5z" fill="#777"/></svg>`],
          [401, html`<div class="t">Shared</div>`], [431, html`<div class="t">Starred</div>`], [461, html`<div class="t">Recent</div>`],
          [491, html`<div class="t">Trash</div>`], [521, html`<div class="t">More</div>`],
          [950, html`<div class="quota">0.2<br><span class="u">Manage</span></div>`],
        ], 992)}</div>
        <div class="right">${vslots(26, [
          [251, html`<div class="mod">${fit("ODIFIED", 44)}<div class="dd">${caret("#bbb")}</div></div>`],
          [291, html`<div class="file"><span class="n">8</span><span class="me">me</span></div>`],
          [331, html`<div class="file"><span class="n">8</span><span class="me">me</span></div>`],
          [371, html`<div class="file hl"><span class="n">am</span><span class="me">me</span></div>`],
          [411, html`<div class="file"><span class="me">me</span></div>`],
          [451, html`<div class="file"></div>`],
        ], 500)}</div>
      </div>
      <div class="dl">
        <div class="item"><svg width="17" height="17" viewBox="0 0 17 17"><circle cx="9" cy="7" r="6.500" fill="#d8d8d8" stroke="#666"/><circle cx="9" cy="4" r="1.500" fill="#555"/><circle cx="6" cy="8" r="1.500" fill="#555"/><circle cx="12" cy="8" r="1.500" fill="#555"/><path d="M0 11h13v5H0z" fill="#35567e"/></svg>${fit("IMG_0785.MOV", 97)}<div class="split"></div></div>
        <svg width="11" height="14" viewBox="0 0 11 14"><path d="M3 0h5v6h3l-5.500 8L0 6h3z" fill="#666"/></svg>
        <div class="link">${fit("Show all downloads...", 141)}</div>
        <svg class="end" width="8" height="9" viewBox="0 0 8 9"><path d="M1 1l6 7M7 1L1 8" stroke="#555" stroke-width="1.500"/></svg>
      </div>`;
  }
}

/* ---------- spreadsheet ---------- */
const LETTERS = [..."ABCDEFGHIJKLMNOPQR"];
const SHEET: Record<number, string[]> = {
  2: ["P0", "3", "-", "-", "-", "-", "-"], 3: ["L", "-", "-", "-", "-", "-", "-"],
  4: ["P1", "0", "0", "0", "0", "0", "-"], 5: ["L", "-", "-", "-", "-", "-", "S: 0-4 (2)"],
  6: ["P2", "1", "1", "-", "-", "-", "-"], 7: ["L", "-", "-", "-", "-", "-", "R: 0-4 (1)"],
  8: ["P3", "2", "2", "2", "-", "-", "-"], 9: ["L", "-", "-", "-", "-", "-", "S: 2-4 (4)"],
  10: ["P4", "-", "-", "-", "-", "-", "-"], 11: ["L", "-", "-", "-", "-", "-", "R 2-4 (3)"],
};
const g = (w: number, h: number, s: unknown, c = "#444") => html`<svg width=${w} height=${h} viewBox=${`0 0 ${w} ${h}`} fill="none" stroke=${c} stroke-width="1.500">${s}</svg>`;
const sep = html`<div class="sep"></div>`;

@customElement("sheet-page")
class SheetPage extends LitElement {
  static styles = [shared, css`
    :host { display: flex; flex-direction: column; height: 992px; background: #fff; font: 13px "Liberation Sans", Arial, sans-serif; color: #000; }
    .head { height: 60px; display: flex; }
    .logo { width: 40px; height: 60px; background: #109d58; display: grid; place-items: center; padding-right: 1px; }
    .main { padding-left: 20px; flex: 1; }
    .name { display: flex; height: 34px; align-items: center; font-size: 18px; font-style: italic; color: #777; padding-top: 5px; }
    .name .s { margin-left: 11px; } .name .f { margin-left: 12px; }
    .menu { display: flex; height: 22px; align-items: center; }
    .saved { color: #777; }
    .acct { display: flex; flex-direction: column; width: 201px; font-size: 11px; padding-top: 8px; gap: 3px; }
    .who { display: flex; align-items: center; justify-content: flex-end; gap: 5px; padding-right: 32px; height: 15px; color: #777; }
    .btns { display: flex; gap: 8px; font-weight: bold; }
    .b { height: 29px; width: 77px; border: 1px solid #dcdcdc; border-radius: 2px; background: #f5f5f5; display: flex; align-items: center; justify-content: center; gap: 8px; color: #444; }
    .b.blue { width: 73px; background: linear-gradient(#4d90fe, #4787ed); border-color: #3079ed; color: #fff; }
    .tools { height: 37px; border-top: 1px solid #d9d9d9; border-bottom: 1px solid #d0d0d0; background: linear-gradient(#f8f8f8, #ececec); display: flex; font-weight: bold; font-size: 11px; color: #444; }
    .tools .slot { height: 34px; margin-top: 1px; margin-bottom: auto; padding-bottom: 2px; }
    .sep { width: 1px; height: 35px; background: #d6d6d6; align-self: flex-start; }
    .back1 { margin-left: -2px; } .back2 { margin-left: -6px; }
    .low { padding-top: 4px; }
    .bold { width: 27px; height: 26px; border: 1px solid #ccc; border-radius: 2px; background: #e4e4e4; display: grid; place-items: center; font: bold 15px "Liberation Serif", serif; color: #000; }
    .it { font: italic bold 15px "Liberation Serif", serif; }
    .st { font: bold 14px "Liberation Sans", sans-serif; text-decoration: line-through; }
    .ac { display: flex; flex-direction: column; align-items: center; font: bold 13px/14px "Liberation Serif", serif; width: 21px; padding-top: 7px; gap: 1px; }
    .ink { width: 21px; height: 4px; background: #000; }
    .ink.wh { background: #fff; }
    .py { font: 14px "Noto Sans", sans-serif; }
    .fx { height: 21px; display: flex; align-items: center; font: italic 14px "Liberation Sans", sans-serif; color: #777; padding-left: 15px; }
    .fx .bar { margin-left: 17px; width: 1px; height: 12px; background: #ccc; }
    .hdr { height: 25px; border-top: 1px solid #bbb; border-bottom: 1px solid #c0c0c0; background: #f3f3f3; display: flex; font-size: 11px; color: #222; }
    .corner { width: 46px; border-right: 4px solid #bbb; border-bottom: 4px solid #bbb; }
    .col { width: 101px; border-right: 1px solid #c9c9c9; display: grid; place-items: center; }
    .col.sel { background: #dcdcdc; }
    .grid { height: 799px; display: flex; border-bottom: 1px solid #ccc; }
    .rows { width: 1909px; overflow: hidden; }
    .row { height: 21px; display: flex; }
    .rh { width: 46px; background: #f3f3f3; border-right: 1px solid #c4c4c4; border-bottom: 1px solid #ccc; font-size: 11px; color: #222; display: grid; place-items: center; flex: none; padding-top: 1px; }
    .rh.sel { background: #dcdcdc; }
    .c { position: relative; width: 101px; flex: none; border-right: 1px solid rgba(0, 0, 0, .16); border-bottom: 1px solid rgba(0, 0, 0, .16); text-align: center; line-height: 22px; height: 21px; }
    .c.red { background: #ea9999; font-weight: bold; }
    .c.lt { background: #d9ead3; } .c.dk { background: #b6d7a8; } .c.bl { background: #a4c2f4; }
    .cursor { position: absolute; left: -1px; top: -1px; width: 102px; height: 22px; border: 2px solid #4285f4; z-index: 1; }
    .handle { position: absolute; right: -4px; bottom: -4px; width: 6px; height: 6px; background: #4285f4; border: 1px solid #fff; box-sizing: content-box; }
    .vs { width: 11px; background: #f5f5f5; border-left: 1px solid #ddd; padding-left: 1px; }
    .vt { width: 9px; height: 29px; background: #c4c4c4; }
    .hs { height: 12px; background: #f6f6f6; border-bottom: 1px solid #a8a8a8; display: flex; }
    .hl { width: 46px; border-right: 1px solid #ddd; }
    .ht { width: 1836px; height: 9px; margin: 1px 0 0 1px; background: #c4c4c4; }
    .foot { flex: 1; background: #eee; display: flex; }
    .tab { width: 72px; height: 28px; background: #fff; border: 1px solid #a8a8a8; border-top: 0; box-shadow: 0 1px 1px #bbb; display: flex; align-items: center; gap: 8px; padding-left: 7px; padding-bottom: 2px; color: #222; }
    .foot .slot { align-items: flex-start; }
    .ico { margin-top: 10px; }
    .ok { width: 52px; height: 34px; margin-top: 2px; background: #fff; display: grid; place-items: center; }
  `];
  cell(r: number, i: number) {
    const t = SHEET[r]?.[i] ?? "";
    const inner = i > 0 && i < 6 && !!SHEET[r];
    return html`<div class=${classMap({ c: true, red: i === 0 && !!SHEET[r], lt: inner && r % 2 === 0, dk: inner && r % 2 === 1, bl: r === 10 && i === 6 })}>${t}${
      r === 13 && i === 0 ? html`<div class="cursor"><div class="handle"></div></div>` : nothing}</div>`;
  }
  render() {
    const m = (x: number, t: string, w: number): Slot => [x, fit(t, w)];
    return html`
      <div class="head">
        <div class="logo"><svg width="19" height="17" viewBox="0 0 19 17"><path d="M.7.7h17.600v15.600H.7zM.7 6h17.600M.7 11h17.600M6.500.7v15.600" fill="none" stroke="#fff" stroke-width="1.400"/></svg></div>
        <div class="main">
          <div class="name">${fit("Untitled spreadsheet", 165)}<div class="s">${starIcon(16, "#c8c8c8")}</div>
            <svg class="f" width="16" height="14" viewBox="0 0 16 14"><path d="M0 0h9l2 3h5v11H0z" fill="#8a8a8a"/></svg></div>
          <div class="menu">${slots(0, [
            m(1980, "File", 21), m(2017, "Edit", 23), m(2056, "View", 28.5), m(2100.5, "Insert", 32.5), m(2149.5, "Format", 40.5),
            m(2206, "Data", 27), m(2250, "Tools", 30.5), m(2297, "Add-ons", 48), m(2361, "Help", 26),
            [2409, html`<div class="saved">${fit("All changes saved in Drive", 155)}</div>`],
          ], 2600)}</div>
        </div>
        <div class="acct">
          <div class="who">${fit("Вадим Петрук", 72)}${caret("#888")}</div>
          <div class="btns"><div class="b">${fit("Comments", 58)}</div><div class="b blue">
            <svg width="9" height="12" viewBox="0 0 9 12"><path d="M2 6V3.500a2.500 2.700 0 0 1 5 0V6" fill="none" stroke="#fff" stroke-width="1.400"/><path d="M0 5.500h9V12H0z" fill="#fff"/><circle cx="4.500" cy="8.700" r="1" fill="#4787ed"/></svg>${fit("Share", 30)}</div></div>
        </div>
      </div>
      <div class="tools">${slots(63, [
        [1983, html`<svg width="14" height="13" viewBox="0 0 14 13"><path d="M3 0h8v2.500H3zM0 3.500h14v6h-2.500v-2h-9v2H0z" fill="#444"/><path d="M3.700 8.200h6.600v4H3.700z" fill="#fff" stroke="#444" stroke-width="1.300"/></svg>`],
        [2009, html`<svg width="15" height="9" viewBox="0 0 15 9"><path d="M0 1v7h7L4.500 5.700Q9 2 14 8 12 0 7.500.5 5 .8 2.700 3.500z" fill="#444"/></svg>`],
        [2035, html`<svg width="15" height="9" viewBox="0 0 15 9"><path d="M15 1v7H8l2.500-2.300Q6 2 1 8 3 0 7.500.5q2.500.3 4.800 3z" fill="#444"/></svg>`],
        [2062, html`<svg width="14" height="16" viewBox="0 0 14 16"><path d="M0 0h12v5H0z" fill="#444"/><path d="M12 2.200h1.400v4.600H6.500v2.500" fill="none" stroke="#444" stroke-width="1.200"/><path d="M5 9h3v7H5z" fill="#444"/></svg>`],
        [2086, sep],
        [2102, html`$`], [2126, html`%`],
        [2149, html`.0<div class="back1">${g(9, 16, svg`<path d="M8 13.500H1M3.500 11 1 13.500 3.500 16"/>`)}</div>`],
        [2173, html`.00<div class="back2">${g(9, 16, svg`<path d="M0 13.500h7M4.500 11 7 13.500 4.500 16"/>`)}</div>`],
        [2197, fit("123", 18)], [2218, caret()], [2233, sep],
        [2249, fit("Arial", 24)], [2324, caret()], [2344, sep],
        [2359, html`<span class="low">10</span>`], [2391, html`<div class="low">${caret()}</div>`], [2407, sep],
        [2412, html`<div class="bold">B</div>`],
        [2446, html`<span class="it">I</span>`], [2472, html`<span class="st">S</span>`],
        [2492, html`<div class="ac">A<div class="ink"></div></div>`], [2516, caret()], [2531, sep],
        [2538, html`<div class="ac"><svg width="18" height="14" viewBox="0 0 18 14"><path d="M6 0l8 8-6 5-7-6z" fill="#444"/><path d="M4 0v5" stroke="#444"/><path d="M15.500 8q3 4 0 5-3-1 0-5z" fill="#888"/></svg><div class="ink wh"></div></div>`],
        [2562, caret()],
        [2578, g(14, 14, svg`<path d="M1 1h12v12H1zM7 1v12M1 7h12"/>`)], [2599, caret()],
        [2611, g(18, 14, svg`<path d="M1 1h5M12 1h5M1 13h5M12 13h5M1 1v3M17 1v3M1 10v3M17 10v3M0 7h6M18 7h-6M4 5l2 2-2 2M14 5l-2 2 2 2"/>`, "#bbb")], [2636, caret("#bbb")],
        [2654, sep],
        [2662, g(15, 13, svg`<path d="M0 1h15M2.500 3.700h10M0 6.400h15M2.500 9.100h10M0 11.800h15"/>`)], [2684, caret()],
        [2698, g(16, 22, svg`<path d="M0 11h16M8 0v8M8 22v-8"/><path d="M5 5h6L8 9zM5 17h6l-3-4z" fill="#444" stroke="none"/>`)], [2720, caret()],
        [2735, g(16, 16, svg`<path d="M0 1h15M0 6.500h15M0 11.500h12q3 0 2.500 2t-3 1.500H9M11 12.500 8.500 15l2.500 1"/>`)], [2762, sep],
        [2770, g(18, 9, svg`<path d="M8 1.500H4.500a3 3 0 0 0 0 6H8M10 1.500h3.500a3 3 0 0 1 0 6H10M5.500 4.500h7" stroke-width="2"/>`)],
        [2798, html`<svg width="16" height="15" viewBox="0 0 16 15"><path d="M0 0h16v15l-3-2.500H0z" fill="#444"/><path d="M3 3.500h10M3 6.300h10M3 9.100h10" stroke="#fff"/></svg>`],
        [2822, g(18, 16, svg`<path d="M2 2h14v12H2z" stroke-width="1.200"/><path d="M5 12V7M9 12V4.500M13 12V8" stroke-width="2"/><path d="M0 0h3v3H0zM15 0h3v3h-3zM0 13h3v3H0zM15 13h3v3h-3z" fill="#444" stroke="none"/>`)],
        [2849, g(13, 12, svg`<path d="M1 1h11L8 6v5H5V6z" stroke-width="1.800"/>`)], [2872, caret()],
        [2889, g(11, 13, svg`<path d="M10 3V1H1.500l5 5.500-5 5.500H10v-2" stroke-width="2"/>`)], [2908, caret()], [2923, sep],
        [2932, html`<span class="py">${fit("Ру", 17)}</span>`], [2958, caret()],
      ], 2980)}</div>
      <div class="fx">fx<div class="bar"></div></div>
      <div class="hdr"><div class="corner"></div>${LETTERS.map((l, i) => html`<div class=${classMap({ col: true, sel: i === 0 })}>${l}</div>`)}</div>
      <div class="grid">
        <div class="rows">${Array.from({ length: 38 }, (_, k) => k + 1).map(r => html`<div class="row">
          <div class=${classMap({ rh: true, sel: r === 13 })}>${r}</div>${Array.from({ length: 19 }, (_, i) => this.cell(r, i))}</div>`)}</div>
        <div class="vs"><div class="vt"></div></div>
      </div>
      <div class="hs"><div class="hl"></div><div class="ht"></div></div>
      <div class="foot">${slots(51, [
        [1971, html`<svg class="ico" width="10" height="11" viewBox="0 0 10 11"><path d="M5 .5v10M0 5.500h10" stroke="#555" stroke-width="2"/></svg>`],
        [2001, html`<svg class="ico" width="12" height="12" viewBox="0 0 12 12"><path d="M0 1h12M0 4.200h12M0 7.400h12M0 10.600h12" stroke="#555" stroke-width="1.900"/></svg>`],
        [2035, html`<div class="tab">${fit("Sheet1", 41)}${caret("#aaa")}</div>`],
        [3624, html`<div class="ok"><svg width="13" height="13" viewBox="0 0 13 13"><circle cx="6.500" cy="6.500" r="6.500" fill="#109d58"/><path d="M3.500 6.500l2.200 2.300 4-4.300" fill="none" stroke="#fff" stroke-width="1.600"/></svg></div>`],
      ], 3700)}</div>`;
  }
}

@customElement("app-root")
class AppRoot extends LitElement {
  static styles = [shared, css`
    :host { display: flex; width: 3840px; height: 1080px; overflow: hidden; background: #fff; }
    .screen { width: 1920px; height: 1080px; position: relative; overflow: hidden; flex: none; }
    .desk { height: 41px; display: flex; justify-content: center; background: linear-gradient(90deg, #cd4f20, #d05424 40%, #cc4e20 60%, #d65f28 84%, #cd5020); }
    .graph { position: absolute; left: 40px; top: 67px; }
    .model { position: absolute; left: 45px; top: 515px; }
  `];
  render() {
    return html`
      <div class="screen">
        <top-panel></top-panel>
        <browser-frame .marks=${[BOOKMARKS[0], BOOKMARKS[18]]} .tabs=${[
          { icon: driveIcon, text: "GlobalPlay - Google Driv", w: 144, active: true },
          { icon: vpIcon, text: "Vadim Petruk", w: 80, active: false },
        ]} .url=${["https", "drive.google.com", "/?usp=folder&authuser=0#folders/0B8CqimVXZmyUkZHJDaXpMNk0Sk1k"]} .urlWidth=${770}></browser-frame>
        <drive-page></drive-page>
        <div class="desk"><app-dock></app-dock></div>
        <graph-window class="graph"></graph-window>
        <model-window class="model"></model-window>
      </div>
      <div class="screen">
        <browser-frame .tabs=${[
          { icon: driveIcon, text: "My Drive - Google Drive", w: 142, active: false },
          { icon: sheetIcon, text: "Untitled spreadsheet - Go", w: 151, active: true },
        ]} .url=${["https", "docs.google.com", "/spreadsheets/d/1imdycTaKuQBeqfCRRMx40zQx6aC020XcUAOovFcK1hw/edit#gid=0"]} .urlWidth=${866}></browser-frame>
        <sheet-page></sheet-page>
      </div>`;
  }
}
